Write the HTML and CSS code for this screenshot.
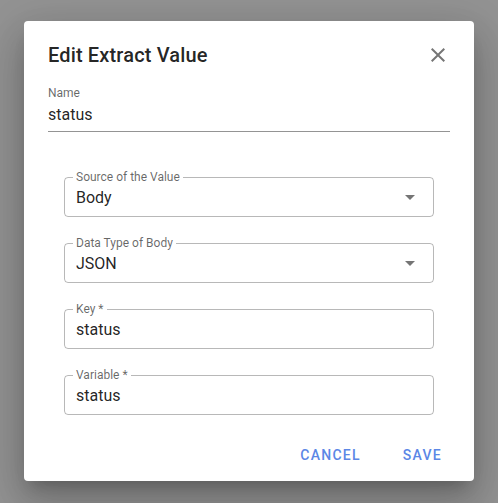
FILE: index.html
```html
<!DOCTYPE html>
<html>
<head>
<meta charset="utf-8">
<link rel="stylesheet" href="styles.css">
</head>
<body>
<div class="dialog">
  <div class="header">
    <h2 class="title">Edit Extract Value</h2>
    <button class="close" aria-label="close">
      <svg viewBox="0 0 24 24" width="24" height="24"><path d="M19 6.41L17.59 5 12 10.59 6.41 5 5 6.41 10.59 12 5 17.59 6.41 19 12 13.41 17.59 19 19 17.59 13.41 12z"/></svg>
    </button>
  </div>
  <div class="content">
    <div class="name-field">
      <div class="name-label">Name</div>
      <div class="name-value">status</div>
    </div>
    <div class="fields">
      <div class="outlined">
        <span class="o-label">Source of the Value</span>
        <span class="o-value">Body</span>
        <svg class="arrow" viewBox="0 0 24 24" width="24" height="24"><path d="M7 10l5 5 5-5z"/></svg>
      </div>
      <div class="outlined">
        <span class="o-label">Data Type of Body</span>
        <span class="o-value">JSON</span>
        <svg class="arrow" viewBox="0 0 24 24" width="24" height="24"><path d="M7 10l5 5 5-5z"/></svg>
      </div>
      <div class="outlined">
        <span class="o-label">Key *</span>
        <span class="o-value">status</span>
      </div>
      <div class="outlined">
        <span class="o-label">Variable *</span>
        <span class="o-value">status</span>
      </div>
    </div>
  </div>
  <div class="actions">
    <button class="btn">Cancel</button>
    <button class="btn">Save</button>
  </div>
</div>
</body>
</html>
```
FILE: styles.css
```css
html, body {
  margin: 0;
  height: 100%;
}
body {
  background: #939393;
  font-family: Roboto, "Liberation Sans", sans-serif;
  padding: 21px 24px 0;
  box-sizing: border-box;
}
.dialog {
  width: 450px;
  background: #fff;
  border-radius: 4px;
  box-shadow: 0px 11px 15px -7px rgba(0,0,0,0.2), 0px 24px 38px 3px rgba(0,0,0,0.14), 0px 9px 46px 8px rgba(0,0,0,0.12);
}
.header {
  display: flex;
  align-items: center;
  justify-content: space-between;
  padding: 18px 24px 0 24px;
  height: 32px;
}
.title {
  margin: 0;
  font-size: 20px;
  font-weight: 500;
  line-height: 32px;
  color: rgba(0,0,0,0.87);
  letter-spacing: 0.0075em;
}
.close {
  border: 0;
  background: none;
  padding: 0;
  margin-right: 0;
  width: 24px;
  height: 24px;
  fill: rgba(0,0,0,0.54);
  display: flex;
}
.content {
  padding: 0 24px;
}
.name-field {
  margin-top: 15px;
  border-bottom: 1px solid rgba(0,0,0,0.42);
  padding-bottom: 7px;
}
.name-label {
  font-size: 12px;
  line-height: 14px;
  color: rgba(0,0,0,0.6);
}
.name-value {
  margin-top: 5px;
  font-size: 16px;
  line-height: 19px;
  color: rgba(0,0,0,0.87);
}
.fields {
  margin-top: 45px;
  padding: 0 16px;
  display: flex;
  flex-direction: column;
  gap: 26px;
}
.outlined {
  position: relative;
  height: 40px;
  box-sizing: border-box;
  border: 1px solid rgba(0,0,0,0.28);
  border-radius: 4px;
  display: flex;
  align-items: center;
  justify-content: space-between;
  padding: 0 11px;
}
.o-label {
  position: absolute;
  top: -7px;
  left: 8px;
  padding: 0 3px;
  background: #fff;
  font-size: 12px;
  line-height: 12px;
  color: rgba(0,0,0,0.6);
}
.o-value {
  font-size: 16px;
  line-height: 19px;
  color: rgba(0,0,0,0.87);
}
.arrow {
  fill: rgba(0,0,0,0.54);
}
.actions {
  display: flex;
  justify-content: flex-end;
  gap: 10px;
  margin-top: 14px;
  padding: 8px 16px;
}
.btn {
  border: 0;
  background: none;
  font-family: Roboto, "Liberation Sans", sans-serif;
  font-size: 14px;
  font-weight: 500;
  text-transform: uppercase;
  letter-spacing: 0.09em;
  color: #5b87e6;
  height: 36px;
  padding: 0 16px;
}
```
